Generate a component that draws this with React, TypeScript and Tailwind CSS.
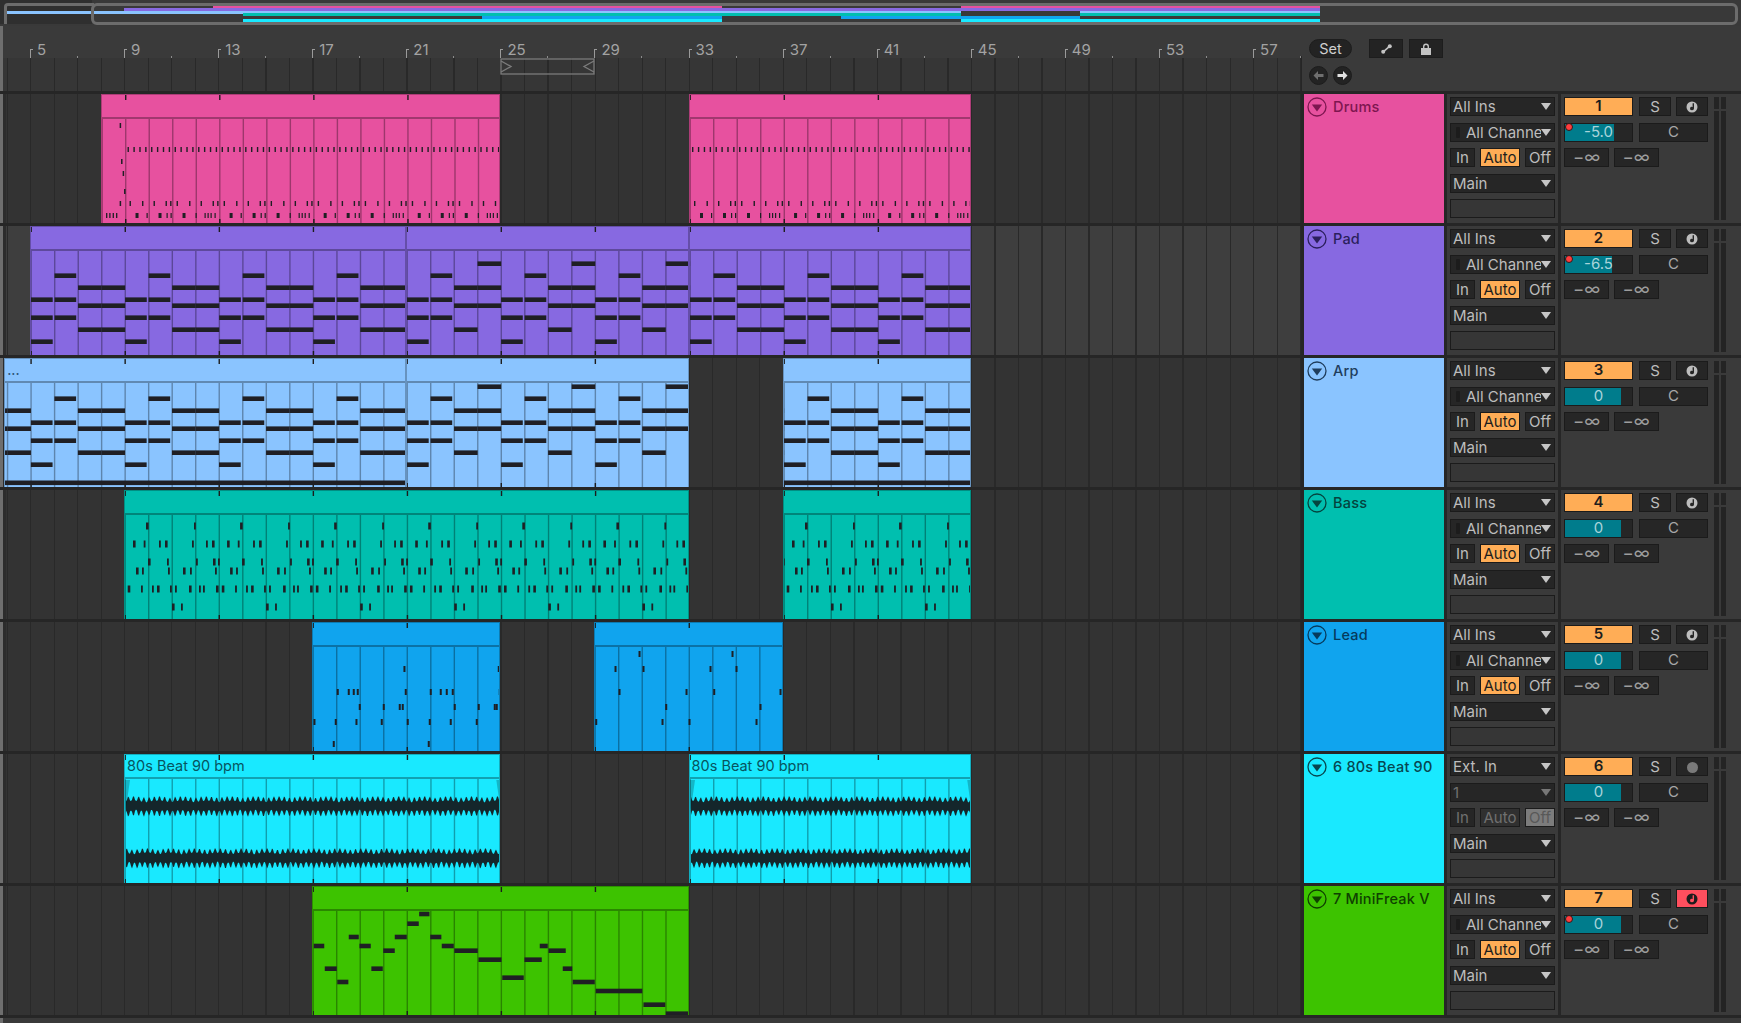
import type { ReactNode } from 'react';

type Note = [number, number, number, number];

// Page x of a bar line in the arrangement, and in the overview strip
const barX = (bar: number) => 30 + (bar - 5) * 23.52;
const miniX = (bar: number) => 123.6 + (bar - 5) * 29.9;
const LANE_LEFT = 3;

const PAD_ROWS = [36.7, 48.7, 60.7, 72.7, 78.7, 90.7, 102.7, 114.7];

// Chord pattern shared by Pad and Arp
function chordNotes(fromBar: number, toBar: number, offset: number): Note[] {
  const notes: Note[] = [];
  for (let bar = fromBar; bar < toBar; bar++) {
    const step = ((bar - 5) % 4 + 4) % 4;
    const x = barX(bar);
    let rows: number[] = [];
    if (step === 0) rows = [3, 5, 7];
    if (step === 1) rows = [1, 3, 5];
    if (step === 2) rows = [2, 4, 6];
    if (step === 3) rows = bar === 24 || bar === 28 || bar === 32 ? [0, 2, 4] : [2, 4, 6];
    const w = step >= 2 ? 23.6 : 21.7;
    rows.forEach((r) => notes.push([x, PAD_ROWS[r] + offset - 2.3, w, 4.6]));
  }
  return notes;
}

function drumNotes(): Note[] {
  const notes: Note[] = [
    [118.2, 28, 1.5, 5],
    [119.6, 64, 1.5, 5],
    [121.2, 76, 1.5, 5],
    [122.6, 94, 1.5, 5],
    [118.2, 106, 1.5, 5],
    [104.6, 118, 1.3, 5],
    [107.8, 118, 1.3, 5],
    [111.2, 118, 1.3, 5],
    [114.6, 118, 1.3, 5],
  ];
  const start = barX(9);
  for (let i = 0; i < 36 * 4; i++) notes.push([start + 2 + i * 5.88, 52, 1.4, 5]);
  for (let p = 0; p < 18; p++) {
    [4, 16.5, 28, 40, 44.6].forEach((o) => notes.push([start + p * 47.04 + o, 106, 1.4, 5]));
  }
  const row120: [number, number][] = [
    [10, 3], [21, 1.2], [33, 3], [41, 1.2], [45, 1.2], [57, 3], [70, 1.2], [79, 1.2], [82, 1.2], [85, 1.2], [89, 1.2],
  ];
  for (let p = 0; p < 9; p++) {
    row120.forEach(([o, w]) => notes.push([start + p * 94.08 + o, 118, w, 5]));
  }
  return notes;
}

function bassNotes(): Note[] {
  const notes: Note[] = [];
  const rows: [number, number[]][] = [
    [35, [21, 69]],
    [53, [8, 18.7, 34, 40, 67, 81, 87]],
    [71, [23, 42, 71, 88, 93]],
    [80, [11, 17, 43, 58, 65, 90]],
    [98, [2.7, 16, 27, 32, 45, 50, 64, 74, 78, 91]],
    [116, [47, 56]],
  ];
  for (let p = 0; p < 9; p++) {
    rows.forEach(([y, xs]) => xs.forEach((o, i) => notes.push([barX(9) + p * 94.08 + o, y - 3.5, i % 3 === 0 ? 2.6 : 1.8, 7])));
  }
  return notes;
}

const leadRows: [number, number[]][] = [
  [31, [639, 732]],
  [46, [403.7, 498, 615, 643, 710, 736]],
  [69, [337, 348, 353, 357, 405, 430, 440, 446, 452, 499, 619, 686, 713.7, 780]],
  [84, [359, 383, 399, 402, 454, 478, 494, 496, 665.7, 760]],
  [99, [313.7, 335, 355.7, 381, 407, 429, 450, 476, 595.7, 662, 689, 756]],
  [121, [333, 428]],
];
const leadNotes: Note[] = leadRows.flatMap(([y, xs]) => xs.map((x): Note => [x - 1, y - 3, 2, 6]));

// x start, x end, y centre as read off the piano roll
const miniNotes: Note[] = (
  [
    [313, 323.5, 945], [324, 336, 967.7], [336.5, 347.6, 981], [348, 358, 936], [358.7, 370, 945], [370.6, 382, 967.7],
    [382.5, 394, 949.7], [394, 406, 936], [406.5, 418, 922.7], [418.4, 428.7, 913], [429.5, 440.6, 936], [441, 453, 945],
    [453.6, 477, 949.7], [477.7, 500.7, 958.7], [501.5, 523, 976.7], [523.7, 541, 958.7], [539, 547, 945], [547.8, 565, 949.7],
    [562, 571.5, 967.7], [572, 594, 981], [595, 641.5, 990], [642.7, 664.5, 1003.7], [665, 688, 1012.7],
  ] as number[][]
).map(([a, b, y]): Note => [a, y - 886 - 2.3, b - a, 4.6]);

function wavePath(x0: number, x1: number, cy: number, seed: number) {
  const top: string[] = [];
  const bottom: string[] = [];
  for (let x = x0; x <= x1; x += 1) {
    const beat = Math.abs(Math.sin((Math.PI * (x + seed)) / 5.2));
    const slow = Math.abs(Math.sin(x * 0.13 + seed));
    const up = 3.5 + 5 * beat * beat * beat + 1.6 * slow;
    const down = 3.5 + 6 * beat * beat * beat + 1.2 * Math.abs(Math.sin(x * 0.21 + seed));
    top.push(`${x},${(cy - up).toFixed(1)}`);
    bottom.unshift(`${x},${(cy + down).toFixed(1)}`);
  }
  return `M${top.join(' L')} L${bottom.join(' L')} Z`;
}

type ClipDef = { from: number; to: number; label?: string; miniFrom?: number };

type Track = {
  name: string;
  slot: string;
  clipBg: string;
  headText: string;
  clipText: string;
  miniBg: string;
  clips: ClipDef[];
  notes: Note[];
  laneBg: string;
  input: string;
  channel: string;
  audio?: boolean;
  volume: string;
  fill: string;
  dot?: boolean;
  arm?: boolean;
};

const LANE_DARK = 'bg-[#333333]';

const tracks: Track[] = [
  {
    name: 'Drums', slot: '1', clipBg: 'bg-[#e7519f]', headText: 'text-[#7d1650]', clipText: 'text-[#7d1650]', miniBg: 'bg-[#e7519f]',
    clips: [{ from: 8, to: 25 }, { from: 33, to: 45 }], notes: drumNotes(), laneBg: LANE_DARK,
    input: 'All Ins', channel: 'All Channels', volume: '-5.0', fill: 'w-[49px]', dot: true,
  },
  {
    name: 'Pad', slot: '2', clipBg: 'bg-[#8769e1]', headText: 'text-[#2b1f5c]', clipText: 'text-[#2b1f5c]', miniBg: 'bg-[#8769e1]',
    clips: [{ from: 5, to: 21 }, { from: 21, to: 33 }, { from: 33, to: 45 }], notes: chordNotes(5, 45, 0), laneBg: 'bg-[#3e3e3e]',
    input: 'All Ins', channel: 'All Channels', volume: '-6.5', fill: 'w-[47px]', dot: true,
  },
  {
    name: 'Arp', slot: '3', clipBg: 'bg-[#8ac4ff]', headText: 'text-[#1f3d5c]', clipText: 'text-[#2c5578]', miniBg: 'bg-[#8ac4ff]',
    clips: [{ from: 3.9, to: 21, label: '...', miniFrom: 1 }, { from: 21, to: 33 }, { from: 37, to: 45 }],
    notes: [...chordNotes(1, 45, -9), [0, 121.5, barX(21), 4.6], [barX(37), 121.5, barX(45) - barX(37), 4.6]],
    laneBg: LANE_DARK, input: 'All Ins', channel: 'All Channels', volume: '0', fill: 'w-[56px]',
  },
  {
    name: 'Bass', slot: '4', clipBg: 'bg-[#00bfaf]', headText: 'text-[#04443e]', clipText: 'text-[#04443e]', miniBg: 'bg-[#00bfaf]',
    clips: [{ from: 9, to: 33 }, { from: 37, to: 45 }], notes: bassNotes(), laneBg: LANE_DARK,
    input: 'All Ins', channel: 'All Channels', volume: '0', fill: 'w-[56px]',
  },
  {
    name: 'Lead', slot: '5', clipBg: 'bg-[#10a4ee]', headText: 'text-[#063a5c]', clipText: 'text-[#063a5c]', miniBg: 'bg-[#10a4ee]',
    clips: [{ from: 17, to: 25 }, { from: 29, to: 37 }], notes: leadNotes, laneBg: LANE_DARK,
    input: 'All Ins', channel: 'All Channels', volume: '0', fill: 'w-[56px]',
  },
  {
    name: '6 80s Beat 90', slot: '6', clipBg: 'bg-[#19e9ff]', headText: 'text-[#07464f]', clipText: 'text-[#07555f]', miniBg: 'bg-[#19e9ff]',
    clips: [{ from: 9, to: 25, label: '80s Beat 90 bpm' }, { from: 33, to: 45, label: '80s Beat 90 bpm' }], notes: [], laneBg: LANE_DARK,
    input: 'Ext. In', channel: '1', audio: true, volume: '0', fill: 'w-[56px]',
  },
  {
    name: '7 MiniFreak V', slot: '7', clipBg: 'bg-[#3dc300]', headText: 'text-[#0f4000]', clipText: 'text-[#0f4000]', miniBg: 'bg-[#3dc300]',
    clips: [{ from: 17, to: 33 }], notes: miniNotes, laneBg: LANE_DARK,
    input: 'All Ins', channel: 'All Channels', volume: '0', fill: 'w-[56px]', dot: true, arm: true,
  },
];

const rulerBars = [5, 9, 13, 17, 21, 25, 29, 33, 37, 41, 45, 49, 53, 57];

function Minimap() {
  return (
    <div className="relative h-[26px] bg-[#393939] overflow-hidden">
      <div className="absolute left-0 top-0 w-[92px] h-[24px] bg-[#2f2f2f]" />
      {tracks.map((track, i) =>
        track.clips.map((clip) => {
          const left = Math.max(miniX(clip.miniFrom ?? clip.from), 5);
          return (
            <div
              key={`${track.name}-${clip.from}`}
              className={`absolute h-[3px] ${track.miniBg}`}
              style={{ left, width: miniX(clip.to) - left, top: Math.round(5.3 + i * 2.7) }}
            />
          );
        }),
      )}
      {/* Frame of the overview and the visible range bracket */}
      <div className="absolute left-[4px] top-[3px] w-[90px] h-[21px] border-l-[3px] border-t-[3px] border-[#6c6c6c] rounded-tl-[4px]" />
      <div className="absolute left-[91px] right-[3px] top-[3px] h-[22px] border-[3px] border-[#6c6c6c] rounded-[6px]" />
    </div>
  );
}

function LoopBrace() {
  return (
    <svg className="absolute left-[497px] top-0" width="96" height="18" viewBox="0 0 96 18" fill="none" stroke="#7c7c7c" strokeWidth="1.3">
      <rect x="1" y="1" width="93" height="15" />
      <path d="M1 3 L11 8.5 L1 14" />
      <path d="M94 3 L84 8.5 L94 14" />
    </svg>
  );
}

function Ruler() {
  return (
    <div className="w-[1301px] shrink-0 border-l-[3px] border-[#6e6e6e] flex flex-col">
      <div className="h-[32px] pl-[27px] flex items-end">
        {rulerBars.map((bar) => (
          <div key={bar} className="relative w-[94.08px] shrink-0 h-[20px] flex items-start">
            <div className="w-[3px] h-[9px] mt-[11px] border-l border-t border-[#9a9a9a]" />
            <span className="ml-[4px] mt-[2px] text-[15px] leading-[20px] text-[#a3a3a3]">{bar}</span>
            <div className="absolute left-[47px] bottom-0 w-px h-[2px] bg-[#8c8c8c]" />
          </div>
        ))}
      </div>
      <div className="relative flex-1 bg-[#363636] bg-[repeating-linear-gradient(90deg,transparent_0,transparent_3.5px,#292929_3.5px,#292929_4.8px,transparent_4.8px,transparent_23.52px)]">
        <LoopBrace />
      </div>
    </div>
  );
}

function RoundArrow({ dir, dim }: { dir: 'left' | 'right'; dim?: boolean }) {
  return (
    <div className="w-[19px] h-[19px] rounded-full bg-[#232323] border border-[#1c1c1c] flex items-center justify-center">
      <svg width="11" height="11" viewBox="0 0 11 11" fill={dim ? '#6f6f6f' : '#e2e2e2'}>
        {dir === 'left' ? <path d="M0.5 5.5 L5 1 V4 H10.5 V7 H5 V10 Z" /> : <path d="M10.5 5.5 L6 1 V4 H0.5 V7 H6 V10 Z" />}
      </svg>
    </div>
  );
}

function ArrangementControls() {
  return (
    <div className="relative flex-1 pl-[8px] pt-[13px]">
      <div className="absolute left-0 top-[30px] bottom-0 w-px bg-[#262626]" />
      <div className="flex items-center">
        <div className="w-[43px] h-[19px] rounded-full bg-[#232323] border border-[#1d1d1d] flex items-center justify-center text-[14.5px] text-[#cfcfcf]">
          Set
        </div>
        <button className="ml-[17px] w-[34px] h-[19px] bg-[#232323] border border-[#1d1d1d] flex items-center justify-center">
          <svg width="11" height="10" viewBox="0 0 11 10" fill="#c4c4c4" stroke="#c4c4c4">
            <path d="M2.2 7.8 L8.8 2.2" strokeWidth="1.6" />
            <circle cx="2.2" cy="7.8" r="2" stroke="none" />
            <circle cx="8.8" cy="2.2" r="2" stroke="none" />
          </svg>
        </button>
        <button className="ml-[6px] w-[34px] h-[19px] bg-[#232323] border border-[#1d1d1d] flex items-center justify-center">
          <svg width="12" height="12" viewBox="0 0 12 12" fill="#c4c4c4">
            <rect x="1" y="5" width="10" height="7" />
            <path d="M3 5 V3.5 a3 3 0 0 1 6 0 V5 H7.6 V3.5 a1.6 1.6 0 0 0 -3.2 0 V5 Z" />
          </svg>
        </button>
      </div>
      <div className="mt-[8px] flex gap-[5px]">
        <RoundArrow dir="left" dim />
        <RoundArrow dir="right" />
      </div>
    </div>
  );
}

function Clip({ clip, track }: { clip: ClipDef; track: Track }) {
  const x0 = barX(clip.from);
  const x1 = barX(clip.to);
  const width = x1 - x0;

  const bars: number[] = [];
  for (let b = Math.ceil(clip.from); b < clip.to; b++) bars.push(barX(b));
  const ticks = bars.filter((_, i) => (Math.ceil(clip.from) + i - 5) % 4 === 0);

  return (
    <div
      className={`absolute top-0 bottom-0 overflow-hidden border-t border-l border-r border-black/25 ${track.clipBg} ${track.clipText}`}
      style={{ left: x0 - LANE_LEFT, width }}
    >
      <div className="h-[24px] border-b-2 border-black/30 pl-[2px] text-[14.5px] leading-[22px] whitespace-nowrap">{clip.label}</div>
      <svg className="absolute left-0 top-0" width={width} height={129} viewBox={`${x0} 0 ${width} 129`}>
        {bars.map((x) => (
          <rect key={x} x={x - 0.5} y={24} width={1.4} height={105} fill="#000" fillOpacity={0.32} />
        ))}
        {ticks.map((x) => (
          <g key={x} fill="#1c1c1c">
            <rect x={x - 0.5} y={0} width={1.4} height={5} />
            <rect x={x - 0.5} y={124} width={1.4} height={5} />
          </g>
        ))}
        {track.notes.map(([x, y, w, h], i) => (
          <rect key={i} x={x} y={y} width={w} height={h} fill="#1f1f24" />
        ))}
        {track.audio && (
          <g fill="#14262b">
            <path d={wavePath(x0 + 1, x1 - 1, 51, 0)} />
            <path d={wavePath(x0 + 1, x1 - 1, 103, 1.6)} />
          </g>
        )}
        {track.audio && (
          <g fill="#000" fillOpacity={0.22}>
            <path d={`M${x0} 25 L${x0 + 5} 25 L${x0} 60 Z`} />
            <path d={`M${x1} 25 L${x1 - 5} 25 L${x1} 60 Z`} />
          </g>
        )}
      </svg>
    </div>
  );
}

function Lane({ track }: { track: Track }) {
  return (
    <div
      className={`relative w-[1301px] shrink-0 border-l-[3px] border-[#6e6e6e] ${track.laneBg} bg-[repeating-linear-gradient(90deg,transparent_0,transparent_3.5px,#292929_3.5px,#292929_4.8px,transparent_4.8px,transparent_23.52px)]`}
    >
      <div className="absolute left-0 top-0 bottom-0 w-[3px] bg-[#2c2c2c]" />
      {track.clips.map((clip) => (
        <Clip key={clip.from} clip={clip} track={track} />
      ))}
    </div>
  );
}

function TrackHead({ track }: { track: Track }) {
  return (
    <div className={`w-[140px] shrink-0 flex items-start pl-[3px] pt-[3px] gap-[6px] ${track.clipBg} ${track.headText}`}>
      <svg width="20" height="20" viewBox="0 0 20 20" className="shrink-0">
        <circle cx="10" cy="10" r="9" fill="none" stroke="currentColor" strokeWidth="1.3" />
        <path d="M4.8 7.5 H15.2 L10 14.5 Z" fill="currentColor" />
      </svg>
      <span className="text-[14.5px] leading-[20px] font-medium whitespace-nowrap tracking-[0.2px]">{track.name}</span>
    </div>
  );
}

function Caret({ dim }: { dim?: boolean }) {
  return (
    <svg width="10" height="7" viewBox="0 0 10 7" className="absolute right-[3px] top-[5px]" fill={dim ? '#777777' : '#c6c6c6'}>
      <path d="M0 0 H10 L5 7 Z" />
    </svg>
  );
}

function Dropdown({ label, dim, grip }: { label: string; dim?: boolean; grip?: boolean }) {
  return (
    <div className={`relative h-[19px] bg-[#262626] border border-[#1b1b1b] text-[15px] leading-[17px] ${dim ? 'text-[#707070]' : 'text-[#bdbdbd]'}`}>
      {grip && (
        <div className="absolute left-[5px] top-[3px] w-[4px] h-[11px] bg-[#1c1c1c] rounded-[1px]" />
      )}
      <div className={`overflow-hidden whitespace-nowrap ${grip ? 'ml-[15px] w-[75px]' : 'ml-[2px]'}`}>{label}</div>
      <Caret dim={dim} />
    </div>
  );
}

function Cell({ className, children }: { className: string; children?: ReactNode }) {
  return <div className={`h-[19px] border pt-px flex items-center justify-center text-[15px] ${className}`}>{children}</div>;
}

function RoutingPanel({ track }: { track: Track }) {
  const dim = track.audio;
  return (
    <div className="w-[111px] shrink-0 bg-[#3a3a3a] px-[3px] pt-[3px] flex flex-col gap-[6.5px]">
      <Dropdown label={track.input} />
      <Dropdown label={track.channel} dim={dim} grip={!dim} />
      <div className="flex justify-between">
        <Cell className={`w-[25px] bg-[#262626] border-[#1b1b1b] ${dim ? 'text-[#707070]' : 'text-[#bdbdbd]'}`}>In</Cell>
        <Cell className={`w-[40px] border-[#1b1b1b] ${dim ? 'bg-[#303030] text-[#707070]' : 'bg-[#ffad56] text-[#1d1d1d]'}`}>Auto</Cell>
        <Cell className={`w-[30px] border-[#1b1b1b] ${dim ? 'bg-[#7c7c7c] text-[#585858]' : 'bg-[#262626] text-[#bdbdbd]'}`}>Off</Cell>
      </div>
      <Dropdown label="Main" />
      <div className="h-[19px] bg-[#363636] border border-[#1b1b1b]" />
    </div>
  );
}

function ArmIcon({ track }: { track: Track }) {
  if (track.audio) return <div className="w-[11px] h-[11px] rounded-full bg-[#7a7a7a]" />;
  const note = track.arm ? '#ff4f5e' : '#262626';
  return (
    <svg width="12" height="12" viewBox="0 0 12 12">
      <circle cx="6" cy="6" r="5.5" fill={track.arm ? '#1d1d1d' : '#bdbdbd'} />
      <path d="M6.6 2.2 H8 V7.6 a2 1.7 0 1 1 -1.4 -1.6 Z" fill={note} />
    </svg>
  );
}

function MixerPanel({ track }: { track: Track }) {
  return (
    <div className="flex-1 bg-[#3a3a3a] pl-[3px] pt-[3px] flex">
      <div className="w-[144px] shrink-0 flex flex-col gap-[6.5px]">
        <div className="flex">
          <div className="w-[69px] h-[19px] bg-[#ffad56] border border-[#1b1b1b] flex items-center justify-center text-[15px] font-semibold text-[#1d1d1d]">
            {track.slot}
          </div>
          <Cell className="ml-[6px] w-[32px] bg-[#262626] border-[#1b1b1b] text-[#bdbdbd]">S</Cell>
          <Cell className={`ml-[5px] w-[32px] border-[#1b1b1b] ${track.arm ? 'bg-[#ff4f5e]' : 'bg-[#262626]'}`}>
            <ArmIcon track={track} />
          </Cell>
        </div>
        <div className="flex">
          <div className="relative w-[69px] h-[19px] bg-[#262626] border border-[#1b1b1b]">
            <div className={`h-full bg-[#007c8c] ${track.fill}`} />
            <div className="absolute inset-0 flex items-center justify-center text-[15px] text-[#a9d4da]">{track.volume}</div>
            {track.dot && (
              <div className="absolute left-[0px] top-[-1px] w-[8px] h-[8px] rounded-full bg-[#ff3d3d] border border-[#2a1a1a]" />
            )}
          </div>
          <Cell className="ml-[6px] w-[69px] bg-[#262626] border-[#1b1b1b] text-[#a8a8a8]">C</Cell>
        </div>
        <div className="flex gap-[4.5px]">
          <Cell className="w-[45px] bg-[#262626] border-[#1b1b1b] !text-[17px] text-[#9d9d9d]">−∞</Cell>
          <Cell className="w-[45px] bg-[#262626] border-[#1b1b1b] !text-[17px] text-[#9d9d9d]">−∞</Cell>
        </div>
      </div>
      <div className="ml-[6px] pb-[3px] flex gap-[1.5px]">
        {[0, 1].map((i) => (
          <div key={i} className="w-[5px] flex flex-col gap-[1.5px]">
            <div className="h-[12px] bg-[#242424]" />
            <div className="flex-1 bg-[#242424]" />
          </div>
        ))}
      </div>
    </div>
  );
}

export default function App() {
  return (
    <div className="w-[1741px] h-[1023px] overflow-hidden bg-[#3a3a3a] flex flex-col [font-family:Inter,'Liberation_Sans',sans-serif]">
      <Minimap />
      <div className="h-[65px] flex">
        <Ruler />
        <ArrangementControls />
      </div>
      {/* Track rows: the gaps show the dark separators */}
      <div className="flex-1 bg-[#262626] pt-[3px] flex flex-col gap-[3px]">
        {tracks.map((track) => (
          <div key={track.name} className="h-[129px] flex gap-[3px]">
            <Lane track={track} />
            <TrackHead track={track} />
            <RoutingPanel track={track} />
            <MixerPanel track={track} />
          </div>
        ))}
        <div className="flex-1 bg-[#393939] border-l-[3px] border-[#6e6e6e]" />
      </div>
    </div>
  );
}
